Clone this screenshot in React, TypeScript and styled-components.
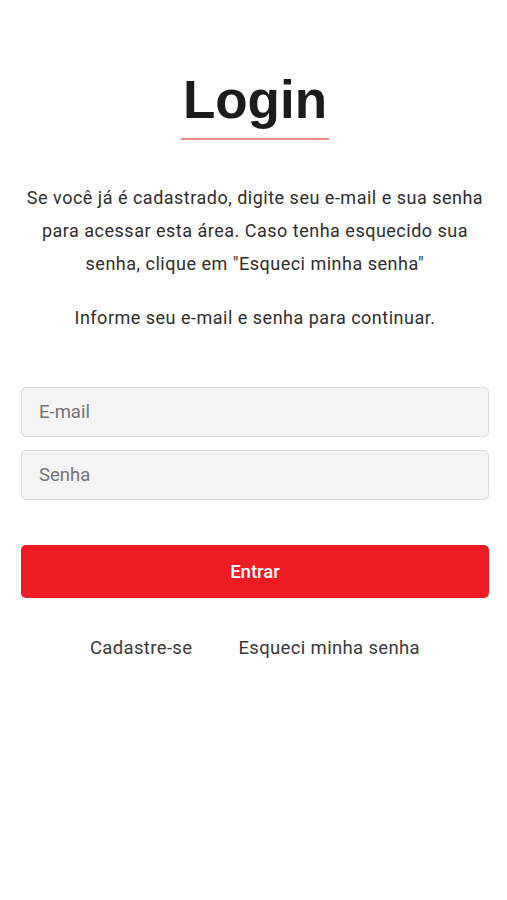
import styled, { createGlobalStyle } from "styled-components";

const GlobalStyle = createGlobalStyle`
  html, body {
    margin: 0;
    padding: 0;
    background: #ffffff;
  }
  * {
    box-sizing: border-box;
  }
`;

const Page = styled.div`
  width: 100%;
  min-height: 100vh;
  padding: 72px 18px 0 21px;
  display: flex;
  flex-direction: column;
  align-items: center;
  font-family: Roboto, "Liberation Sans", sans-serif;
  color: #2e2e2e;
`;

const Title = styled.h1`
  margin: 0;
  font-family: "Liberation Sans", Arial, sans-serif;
  font-size: 53px;
  font-weight: 700;
  line-height: 56px;
  color: #1c1c1c;
  padding: 0 2px 10px;
  border-bottom: 2px solid #f08a8a;
`;

const Intro = styled.p`
  margin: 41px 0 0;
  font-size: 18px;
  line-height: 33px;
  text-align: center;
  letter-spacing: 0.5px;
`;

const Hint = styled.p`
  margin: 21px 0 0;
  font-size: 18px;
  line-height: 33px;
  text-align: center;
  letter-spacing: 0.5px;
`;

const Form = styled.form`
  width: 100%;
  margin-top: 53px;
  display: flex;
  flex-direction: column;
  gap: 13px;
`;

const Field = styled.input`
  width: 100%;
  height: 50px;
  padding: 0 17px;
  border: 1px solid #dcdcdc;
  border-radius: 5px;
  background: #f4f4f4;
  font-family: Roboto, "Liberation Sans", sans-serif;
  font-size: 18.5px;
  color: #333333;
  outline: none;

  &::placeholder {
    color: #747474;
  }
`;

const Submit = styled.button`
  width: 100%;
  height: 53px;
  margin-top: 32px;
  border: none;
  border-radius: 5px;
  background: #ed1c24;
  color: #ffffff;
  font-family: Roboto, "Liberation Sans", sans-serif;
  font-size: 18.5px;
  font-weight: 500;
  cursor: pointer;
`;

const Links = styled.div`
  margin-top: 39px;
  display: flex;
  gap: 46px;
`;

const LinkText = styled.a`
  font-size: 18.5px;
  letter-spacing: 0.35px;
  color: #3a3a3a;
  text-decoration: none;
  cursor: pointer;
`;

export default function App() {
  return (
    <>
      <GlobalStyle />
      <Page>
        <Title>Login</Title>
        <Intro>
          Se você já é cadastrado, digite seu e-mail e sua senha
          <br />
          para acessar esta área. Caso tenha esquecido sua
          <br />
          senha, clique em "Esqueci minha senha"
        </Intro>
        <Hint>Informe seu e-mail e senha para continuar.</Hint>
        <Form onSubmit={(e) => e.preventDefault()}>
          <Field type="email" placeholder="E-mail" />
          <Field type="password" placeholder="Senha" />
          <Submit type="submit">Entrar</Submit>
        </Form>
        <Links>
          <LinkText>Cadastre-se</LinkText>
          <LinkText>Esqueci minha senha</LinkText>
        </Links>
      </Page>
    </>
  );
}
